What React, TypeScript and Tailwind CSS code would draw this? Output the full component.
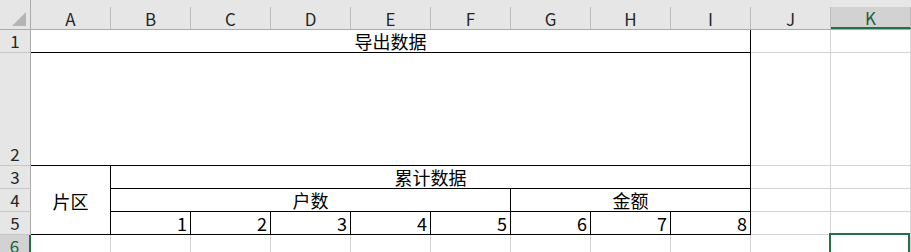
import React from "react";

const cols = ["A", "B", "C", "D", "E", "F", "G", "H", "I", "J", "K"];
const font = { fontFamily: '"Noto Sans CJK SC", "Liberation Sans", sans-serif' };

function ColHead({ label, active }: { label: string; active?: boolean }) {
  return (
    <div className="h-[30px] border-b border-[#ababab] bg-[#e6e6e6]">
      <div
        className={
          "mt-[7px] h-[22px] border-r border-[#bcbcbc] flex items-center justify-center text-[17px] leading-none " +
          (active ? "bg-[#d2d2d2] text-[#1e5f3a] border-b-2 border-b-[#217346]" : "text-[#262626]")
        }
      >
        {label}
      </div>
    </div>
  );
}

function RowHead({ n, span = "", active }: { n: number; span?: string; active?: boolean }) {
  return (
    <div
      className={
        "col-start-1 flex items-end justify-center pb-[1px] text-[17px] leading-[20px] border-b border-[#c6c6c6] " +
        (active
          ? "bg-[#d2d2d2] border-r-2 border-r-[#217346] text-[#1e5f3a]"
          : "bg-[#e6e6e6] border-r border-r-[#ababab] text-[#262626]") +
        " " +
        span
      }
    >
      {n}
    </div>
  );
}

// plain grid cell
function G({ children, className = "" }: { children?: React.ReactNode; className?: string }) {
  return <div className={"border-r border-b border-[#d4d4d4] " + className}>{children}</div>;
}

// cell inside the bordered table
function T({ children, className = "" }: { children?: React.ReactNode; className?: string }) {
  return (
    <div className={"border-r border-b border-black flex items-end pb-[1px] text-[18px] leading-[20px] text-black " + className}>
      {children}
    </div>
  );
}

export default function App() {
  return (
    <div className="w-[911px] h-[252px] overflow-hidden bg-white" style={font}>
      <div className="grid grid-cols-[31px_repeat(11,80px)] grid-rows-[30px_23px_113px_23px_23px_23px_23px]">
        {/* header row */}
        <div className="h-[30px] bg-[#e6e6e6] border-b border-r border-[#ababab] relative">
          <svg className="absolute left-[12px] top-[12px]" width="14" height="14" viewBox="0 0 14 14">
            <polygon points="14,0 14,14 0,14" fill="#b5b5b5" />
          </svg>
        </div>
        {cols.map((c) => (
          <ColHead key={c} label={c} active={c === "K"} />
        ))}

        {/* row 1 */}
        <RowHead n={1} />
        <T className="col-span-9 justify-center">导出数据</T>
        <G />
        <G />

        {/* row 2 */}
        <RowHead n={2} />
        <T className="col-span-9" />
        <G />
        <G />

        {/* rows 3-5 */}
        <RowHead n={3} />
        <T className="row-span-3 justify-center !items-center pt-[2px]">片区</T>
        <T className="col-span-8 justify-center">累计数据</T>
        <G />
        <G />

        <RowHead n={4} />
        <T className="col-span-5 justify-center">户数</T>
        <T className="col-span-3 justify-center">金额</T>
        <G />
        <G />

        <RowHead n={5} />
        {[1, 2, 3, 4, 5, 6, 7, 8].map((n) => (
          <T key={n} className="justify-end pr-[3px]">
            {n}
          </T>
        ))}
        <G />
        <G />

        {/* row 6 */}
        <RowHead n={6} active />
        {cols.slice(0, 10).map((c) => (
          <G key={c} />
        ))}
        <G className="relative">
          <div className="absolute -left-[2px] -top-[2px] right-0 h-[30px] border-2 border-[#217346]" />
        </G>
      </div>
    </div>
  );
}
